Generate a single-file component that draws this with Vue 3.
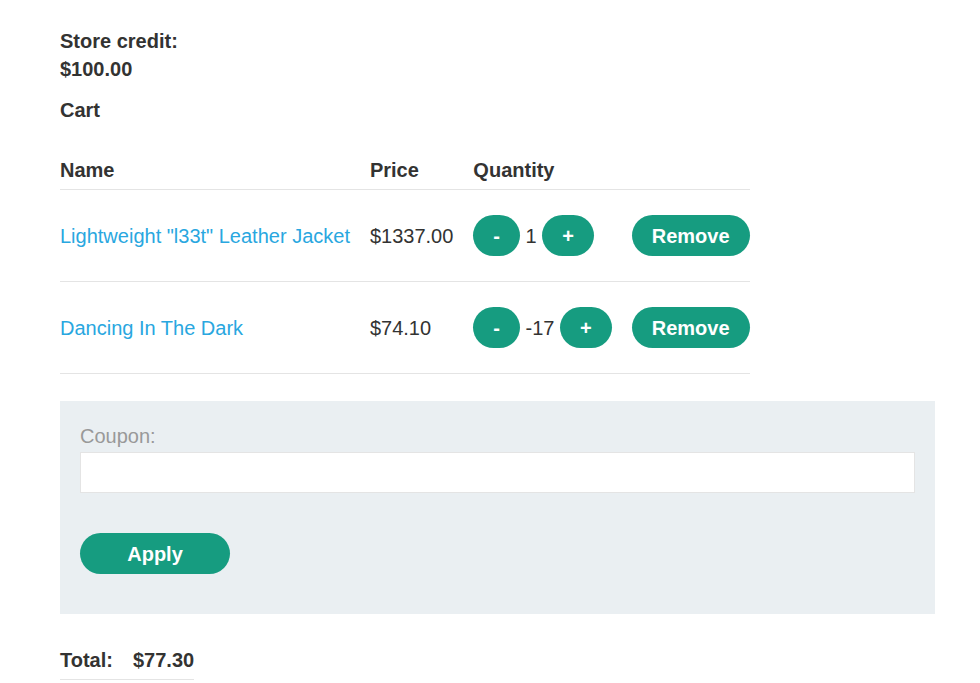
<script setup>
import { ref } from 'vue'

const items = ref([
  { id: 1, name: 'Lightweight "l33t" Leather Jacket', price: '$1337.00', quantity: 1 },
  { id: 2, name: 'Dancing In The Dark', price: '$74.10', quantity: -17 },
])
const coupon = ref('')

function remove(id) {
  items.value = items.value.filter((item) => item.id !== id)
}
</script>

<template>
  <main class="page">
    <section class="credit">
      <p>Store credit:</p>
      <p>$100.00</p>
    </section>
    <h1 class="title">Cart</h1>

    <table class="cart">
      <thead>
        <tr>
          <th>Name</th>
          <th>Price</th>
          <th>Quantity</th>
          <th></th>
        </tr>
      </thead>
      <tbody>
        <tr v-for="item in items" :key="item.id">
          <td><a class="link" href="#">{{ item.name }}</a></td>
          <td>{{ item.price }}</td>
          <td>
            <button class="button" type="button" @click="item.quantity--">-</button>
            {{ item.quantity }}
            <button class="button" type="button" @click="item.quantity++">+</button>
          </td>
          <td><button class="button" type="button" @click="remove(item.id)">Remove</button></td>
        </tr>
      </tbody>
    </table>

    <form class="coupon" @submit.prevent>
      <label for="coupon">Coupon:</label>
      <input id="coupon" v-model="coupon" type="text" />
      <button class="button wide" type="submit">Apply</button>
    </form>

    <table class="total">
      <tbody>
        <tr>
          <th>Total:</th>
          <th>$77.30</th>
        </tr>
      </tbody>
    </table>
  </main>
</template>

<style>
body {
  margin: 0;
  background: #fff;
}
</style>

<style scoped>
.page {
  padding: 27px 45px 0 60px;
  font-family: "Liberation Sans", Arial, sans-serif;
  font-size: 20px;
  line-height: 28px;
  color: #333332;
}

.credit {
  font-weight: 700;
}

.credit p {
  margin: 0;
}

.title {
  margin: 13px 0 0;
  font-size: 20px;
  line-height: 28px;
}

table {
  border-collapse: collapse;
  text-align: left;
}

th,
td {
  padding: 0 20px 0 0;
  border-bottom: 1px solid #e4e4e4;
  white-space: nowrap;
}

th:last-child,
td:last-child {
  padding-right: 0;
}

.cart {
  margin-top: 32px;
}

.cart th {
  padding-bottom: 5px;
}

.cart td {
  padding-top: 25px;
  padding-bottom: 25px;
}

.link {
  color: #29a7df;
  text-decoration: none;
}

.button {
  box-sizing: border-box;
  height: 41px;
  margin: 0;
  padding: 0 20px;
  border: 0;
  border-radius: 21px;
  background: #169c80;
  color: #fff;
  font: 700 20px/28px "Liberation Sans", Arial, sans-serif;
  cursor: pointer;
}

.wide {
  display: block;
  min-width: 150px;
}

.coupon {
  margin-top: 27px;
  padding: 21px 20px 40px;
  background: #eaeff2;
}

.coupon label {
  display: block;
  margin-bottom: 2px;
  color: #999;
}

.coupon input {
  display: block;
  box-sizing: border-box;
  width: 100%;
  height: 41px;
  margin-bottom: 40px;
  padding: 0 10px;
  border: 1px solid #e4e4e4;
  background: #fff;
  font: 20px/28px "Liberation Sans", Arial, sans-serif;
  color: #333332;
}

.total {
  margin-top: 32px;
}

.total th {
  padding-bottom: 5px;
}
</style>
